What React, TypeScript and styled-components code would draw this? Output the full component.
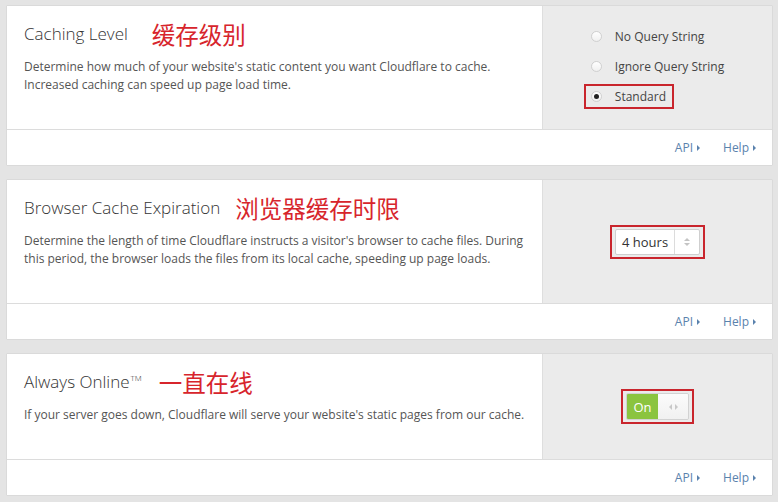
import styled, { createGlobalStyle } from "styled-components";

type Panel =
  | { kind: "radio"; options: string[]; selected: number }
  | { kind: "select"; value: string }
  | { kind: "toggle"; on: boolean };

type Setting = {
  title: string;
  tm?: boolean;
  note: string;
  noteGap: number;
  description: string;
  mainHeight: number;
  panel: Panel;
};

const settings: Setting[] = [
  {
    title: "Caching Level",
    note: "缓存级别",
    noteGap: 24,
    description:
      "Determine how much of your website's static content you want Cloudflare to cache. Increased caching can speed up page load time.",
    mainHeight: 123,
    panel: {
      kind: "radio",
      options: ["No Query String", "Ignore Query String", "Standard"],
      selected: 2,
    },
  },
  {
    title: "Browser Cache Expiration",
    note: "浏览器缓存时限",
    noteGap: 15,
    description:
      "Determine the length of time Cloudflare instructs a visitor's browser to cache files. During this period, the browser loads the files from its local cache, speeding up page loads.",
    mainHeight: 123,
    panel: { kind: "select", value: "4 hours" },
  },
  {
    title: "Always Online",
    tm: true,
    note: "一直在线",
    noteGap: 17,
    description:
      "If your server goes down, Cloudflare will serve your website's static pages from our cache.",
    mainHeight: 105,
    panel: { kind: "toggle", on: true },
  },
];

export default function App() {
  return (
    <Page>
      <GlobalStyle />
      {settings.map((s) => (
        <Card key={s.title}>
          <Main $height={s.mainHeight}>
            <Info>
              <TitleRow>
                <Title>
                  {s.title}
                  {s.tm && <Tm>TM</Tm>}
                </Title>
                <Note $gap={s.noteGap}>{s.note}</Note>
              </TitleRow>
              <Description>{s.description}</Description>
            </Info>
            <Control>{renderPanel(s.panel)}</Control>
          </Main>
          <Footer>
            <Link>
              API <Caret />
            </Link>
            <Link>
              Help <Caret />
            </Link>
          </Footer>
        </Card>
      ))}
    </Page>
  );
}

function renderPanel(panel: Panel) {
  if (panel.kind === "radio") {
    return (
      <RadioGroup>
        {panel.options.map((o, i) => (
          <RadioRow key={o} $marked={i === panel.selected}>
            <Radio $checked={i === panel.selected} />
            <RadioLabel>{o}</RadioLabel>
          </RadioRow>
        ))}
      </RadioGroup>
    );
  }
  if (panel.kind === "select") {
    return (
      <Marked>
        <Select>
          <SelectValue>{panel.value}</SelectValue>
          <SelectArrows>
            <svg width="6" height="10" viewBox="0 0 6 10">
              <path d="M0 4 L3 1 L6 4 Z" fill="#c4c4c4" />
              <path d="M0 6 L3 9 L6 6 Z" fill="#c4c4c4" />
            </svg>
          </SelectArrows>
        </Select>
      </Marked>
    );
  }
  return (
    <Marked>
      <Toggle>
        <ToggleOn>{panel.on ? "On" : "Off"}</ToggleOn>
        <ToggleKnob>
          <svg width="9" height="6" viewBox="0 0 9 6">
            <path d="M3 0 L0 3 L3 6 Z" fill="#c8c8c8" />
            <path d="M6 0 L9 3 L6 6 Z" fill="#c8c8c8" />
          </svg>
        </ToggleKnob>
      </Toggle>
    </Marked>
  );
}

const GlobalStyle = createGlobalStyle`
  html, body {
    margin: 0;
    background: #e4e4e4;
  }
  body {
    font-family: "Open Sans", "Noto Sans CJK SC", sans-serif;
  }
`;

const Page = styled.div`
  display: flex;
  flex-direction: column;
  gap: 13px;
  padding: 5px 5px 6px 6px;
  width: 778px;
  box-sizing: border-box;
`;

const Card = styled.div`
  background: #fff;
  border: 1px solid #dadada;
  border-radius: 1px;
`;

const Main = styled.div<{ $height: number }>`
  display: grid;
  grid-template-columns: 1fr 230px;
  height: ${(p) => p.$height}px;
  border-bottom: 1px solid #dcdcdc;
`;

const Info = styled.div`
  padding: 15px 8px 0 17px;
`;

const TitleRow = styled.div`
  display: flex;
  align-items: center;
  height: 24px;
`;

const Title = styled.div`
  font-size: 17px;
  color: #333;
  font-weight: 300;
`;

const Tm = styled.sup`
  font-size: 8px;
  vertical-align: 7px;
  margin-left: 1px;
`;

const Note = styled.div<{ $gap: number }>`
  margin-left: ${(p) => p.$gap}px;
  font-family: "Noto Sans CJK SC", sans-serif;
  font-size: 23.5px;
  line-height: 24px;
  color: #d7252c;
  margin-top: 2px;
`;

const Description = styled.p`
  margin: 13px 0 0;
  font-size: 12px;
  line-height: 18px;
  color: #555;
`;

const Control = styled.div`
  background: #ebebeb;
  border-left: 1px solid #dedede;
  display: flex;
  align-items: center;
  justify-content: center;
`;

const RadioGroup = styled.div`
  display: flex;
  flex-direction: column;
  align-items: flex-start;
  gap: 5px;
  margin-top: -3px;
  margin-left: 1px;
`;

const RadioRow = styled.div<{ $marked: boolean }>`
  display: flex;
  align-items: center;
  gap: 13px;
  height: 21px;
  padding: 0 6px 0 5px;
  border: 2px solid ${(p) => (p.$marked ? "#c9252d" : "transparent")};
`;

const Radio = styled.span<{ $checked: boolean }>`
  width: 11px;
  height: 11px;
  border-radius: 50%;
  box-sizing: border-box;
  border: 1px solid #d0d0d0;
  background: linear-gradient(#ffffff, #f0f0f0);
  position: relative;
  &::after {
    content: "";
    display: ${(p) => (p.$checked ? "block" : "none")};
    position: absolute;
    left: 2px;
    top: 2px;
    width: 5px;
    height: 5px;
    border-radius: 50%;
    background: #222;
  }
`;

const RadioLabel = styled.span`
  font-size: 12px;
  color: #444;
`;

const Marked = styled.div`
  border: 2px solid #c9252d;
  padding: 2px 3px;
`;

const Select = styled.div`
  display: flex;
  align-items: stretch;
  width: 85px;
  height: 26px;
  box-sizing: border-box;
  border: 1px solid #cfcfcf;
  border-radius: 2px;
  background: #fff;
`;

const SelectValue = styled.div`
  flex: 1;
  display: flex;
  align-items: center;
  padding-left: 6px;
  font-size: 13px;
  color: #333;
`;

const SelectArrows = styled.div`
  width: 24px;
  border-left: 1px solid #dcdcdc;
  display: flex;
  align-items: center;
  justify-content: center;
`;

const Toggle = styled.div`
  display: flex;
  width: 63px;
  height: 27px;
  box-sizing: border-box;
  border: 1px solid #d2d2d2;
  border-radius: 2px;
  overflow: hidden;
`;

const ToggleOn = styled.div`
  width: 31px;
  background: #8bc43f;
  color: #fff;
  font-size: 13px;
  display: flex;
  align-items: center;
  justify-content: center;
`;

const ToggleKnob = styled.div`
  flex: 1;
  background: linear-gradient(#fbfbfb, #f1f1f1);
  display: flex;
  align-items: center;
  justify-content: center;
`;

const Footer = styled.div`
  height: 35px;
  display: flex;
  align-items: center;
  justify-content: flex-end;
  gap: 23px;
  padding-right: 16px;
`;

const Link = styled.span`
  display: flex;
  align-items: center;
  gap: 4px;
  font-size: 12px;
  color: #5a82ad;
`;

const Caret = styled.span`
  width: 0;
  height: 0;
  border-top: 3px solid transparent;
  border-bottom: 3px solid transparent;
  border-left: 3px solid #5a82ad;
`;
